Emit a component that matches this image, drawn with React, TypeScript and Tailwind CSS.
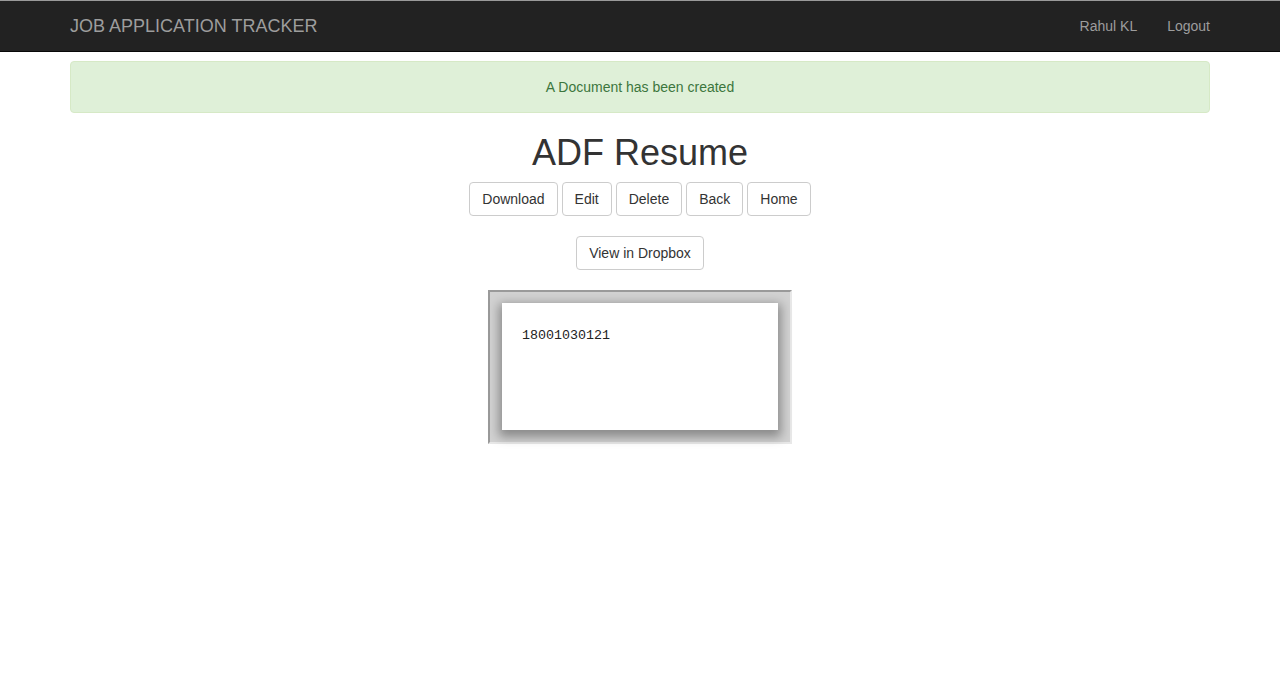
import React from 'react';

const buttons = ['Download', 'Edit', 'Delete', 'Back', 'Home'];

function Btn({ label }: { label: string }) {
  return (
    <button className="h-[34px] px-3 border border-[#ccc] rounded bg-white text-[14px] text-[#333] leading-5">
      {label}
    </button>
  );
}

export default function App() {
  return (
    <div className="min-h-[700px] bg-white font-['Liberation_Sans',Arial,sans-serif] text-[#333]">
      <nav className="h-[52px] bg-[#222] border-t border-t-[#9a9a9a] border-b border-b-[#080808]">
        <div className="w-[1170px] mx-auto px-[15px] h-[50px] flex items-center justify-between">
          <span className="text-[18px] text-[#9d9d9d]">JOB APPLICATION TRACKER</span>
          <div className="flex -mr-[15px] text-[14px] text-[#9d9d9d]">
            <span className="px-[15px]">Rahul KL</span>
            <span className="px-[15px]">Logout</span>
          </div>
        </div>
      </nav>

      <div className="w-[1170px] mx-auto px-[15px] pt-[9px]">
        <div className="h-[52px] flex items-center justify-center bg-[#dff0d8] border border-[#d6e9c6] rounded text-[14px] text-[#3c763d]">
          A Document has been created
        </div>

        <div className="flex flex-col items-center">
          <h1 className="mt-[20px] text-[36px] leading-[40px] text-[#333]">ADF Resume</h1>
          <div className="mt-[9px] flex gap-1">
            {buttons.map((b) => (
              <Btn key={b} label={b} />
            ))}
          </div>
          <div className="mt-5">
            <Btn label="View in Dropbox" />
          </div>

          <div className="mt-5 w-[304px] h-[154px] border-2 border-t-[#9a9a9a] border-l-[#9a9a9a] border-b-[#e8e8e8] border-r-[#e8e8e8] bg-[#d2d2d2] pt-[11px] pl-3">
            <div className="w-[276px] h-[127px] bg-white shadow-[0_4px_10px_3px_rgba(0,0,0,0.35)] pt-[19px] pl-5">
              <span className="font-['Liberation_Mono',monospace] text-[13.33px] text-[#222]">18001030121</span>
            </div>
          </div>
        </div>
      </div>
    </div>
  );
}
